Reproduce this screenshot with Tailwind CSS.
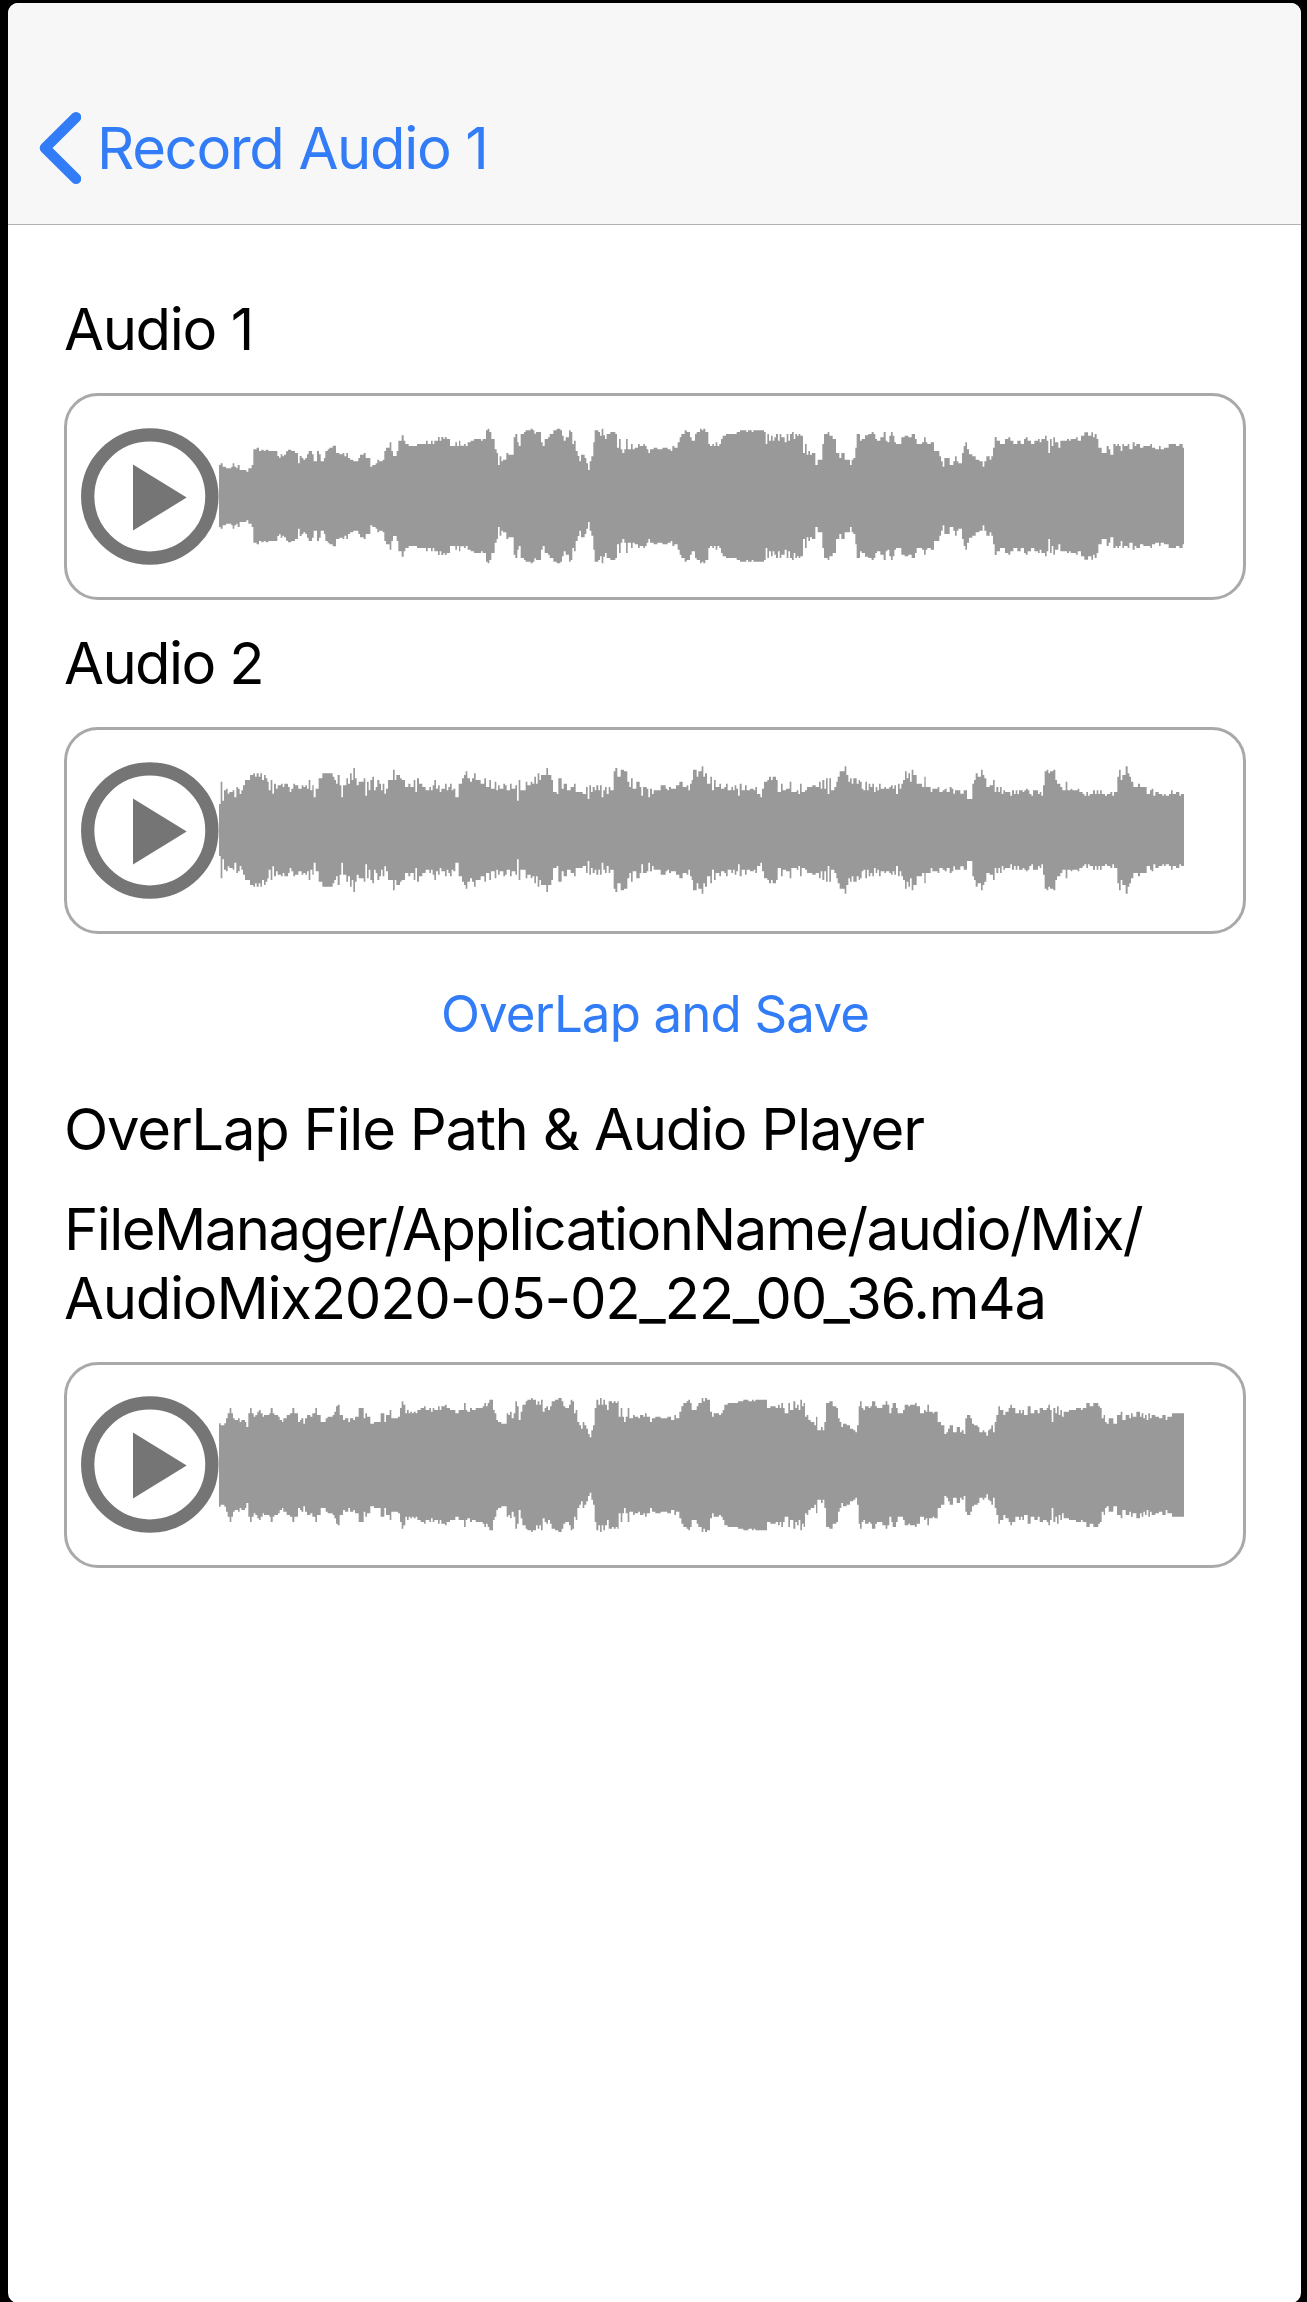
<!DOCTYPE html>
<html lang="en">
<head>
<meta charset="utf-8">
<title>Record Audio</title>
<script src="https://cdn.jsdelivr.net/npm/@tailwindcss/browser@4"></script>
</head>
<body class="bg-black">
<div class="h-[2302px] w-[1307px] overflow-hidden bg-black pt-[3px] pl-2 font-['Inter',sans-serif] text-[58px] leading-[70px] text-black">
  <main class="flex h-[2300px] w-[1293px] flex-col overflow-hidden rounded-[10px] bg-white">
    <header class="flex h-[222px] shrink-0 items-start border-b border-[#b2b2b2] bg-[#f7f7f7] pt-[109px] pl-[31px] text-[#327cf7]">
      <svg class="h-[72px] w-[42px] shrink-0" viewBox="0 0 42 72" fill="none" stroke="currentColor" stroke-width="10.6" stroke-linecap="round" stroke-linejoin="round"><path d="M37 5.3 6 36l31 30.7"/></svg>
      <span class="mt-px ml-4 whitespace-nowrap tracking-[-1.35px]">Record Audio 1</span>
    </header>
    <div class="flex w-full flex-col pt-[69px] pr-[55px] pl-14">
      <h2 class="tracking-[-1.35px]">Audio 1</h2>
      <section data-wave="0" class="mt-[29px] flex h-[206.5px] items-center rounded-[34px] border-3 border-[#a9a9a9]"></section>
      <h2 class="mt-[28px] tracking-[-1.6px]">Audio 2</h2>
      <section data-wave="1" class="mt-[29.5px] flex h-[206.5px] items-center rounded-[34px] border-3 border-[#a9a9a9]"></section>
      <button class="mt-[49px] h-[62px] text-[51px] leading-[62px] tracking-[-0.85px] text-[#327cf7]">OverLap and Save</button>
      <h2 class="mt-[49px] tracking-[-1.25px]">OverLap File Path &amp; Audio Player</h2>
      <p class="mt-[31px] leading-[69px]"><span class="tracking-[-1.55px]">FileManager/ApplicationName/audio/Mix/</span><br><span class="tracking-[-1.25px]">AudioMix2020-05-02_22_00_36.m4a</span></p>
      <section data-wave="2" class="mt-[29px] flex h-[206.5px] items-center rounded-[34px] border-3 border-[#a9a9a9]"></section>
    </div>
  </main>
</div>
<script>
// Each track: vertical axis and three segments of "start level" pairs, in thirds of a pixel.
const tracks = [
 {axis:334, parts:[
  [-477,`477 241 482 236 488 246 498 251 514 246 518 236 523 246 529 251 533 241 539 256 559 261 565 251 575 241 580 194 590 189 597 199 604 195 611 199 617 195 625 199 652 214 657 219 662 209 667 215 672 210 678 200 684 195 694 199 705 205 714 236 719 214 725 220 730 225 736 220 741 209 746 199 756 209 761 230 771 199 777 209 782 230 792 220 796 199 803 194 808 189 818 183 828 205 838 209 848 205 853 215 859 205 864 220 870 225 880 230 895 220 900 210 911 205 917 220 931 246 937 241 947 236 952 225 957 230 968 225 973 199 978 189 989 173 994 199 999 214 1010 199 1015 168 1025 152 1031 168 1036 178 1046 184 1071 178 1098 168 1103 178 1113 168 1118 178 1123 168 1134 157 1139 168 1144 157 1150 162 1155 157 1160 163 1170 184 1186 173 1191 184 1197 168 1201 183 1212 178 1217 184 1223 173`],
  [753,`2 168 12 163 33 168 38 163 48 137 53 132 58 142 64 163 74 194 80 205 84 241 89 215 94 230 99 225 109 205 115 210 131 158 136 148 142 173 146 184 152 148 162 142 167 137 182 132 188 137 193 147 198 142 213 173 218 184 224 163 234 158 239 148 250 137 260 132 271 137 276 153 281 168 287 158 297 137 302 142 307 178 312 168 317 199 323 214 328 230 333 210 344 220 349 236 354 256 359 230 364 215 370 173 374 137 385 142 390 153 395 132 400 152 405 163 410 148 421 142 436 148 441 189 447 163 452 194 457 205 463 194 468 163 473 194 483 178 488 194 494 189 504 178 509 184 520 178 525 184 530 194 535 205 540 194 551 189 562 194 577 189 593 194 602 199 607 184 613 189 623 173 629 158 634 148 644 137 650 142 660 158 665 168 675 148 680 142 690 132 695 137 700 132 706 142 715 178 720 184 727 178 732 184 737 173 742 184 748 178 753 163 758 153 768 148 800 142 810 137 829 142 834 137 845 142 850 137 882 142 887 178 892 148 897 168 903 153 908 168 913 158 918 148 924 168 929 148 934 158 944 173 950 148 955 168 960 148 966 142 971 163 976 148 981 153 986 148 991 153 999 205 1005 178 1010 210 1015 199 1020 210 1026 205 1036 241 1043 225 1057 178 1062 148 1073 142 1078 153 1088 163 1098 205 1108 220 1114 205 1124 225 1140 241 1145 225 1150 220 1156 189 1160 148`],
  [1923,`0 168 5 163 15 152 25 148 35 142 41 148 46 163 51 168 61 158 71 142 77 168 82 173 88 153 93 142 98 153 103 173 108 178 124 158 134 153 145 158 155 148 165 163 170 178 186 173 192 158 197 173 202 178 212 173 222 199 238 215 243 230 248 246 253 220 269 241 280 230 285 215 290 230 295 236 306 205 311 184 316 173 321 194 327 209 337 215 347 225 358 230 368 246 373 230 379 215 389 225 394 215 399 189 404 157 410 168 420 178 435 163 445 158 451 168 460 178 472 168 482 178 492 163 497 158 503 168 513 178 523 168 534 163 539 173 544 163 555 153 560 168 565 205 570 163 575 184 580 158 585 173 595 189 601 168 621 163 627 168 632 163 648 158 653 168 663 153 673 143 684 153 694 143 699 158 704 148 710 163 715 189 725 205 740 184 746 194 751 210 760 178 767 184 772 178 777 184 782 199 787 178 792 184 803 178 808 194 818 173 824 184 829 178 840 189 850 184 871 178 876 189 886 194 897 184 902 194 912 189 926 178 948 184 958 178 968 189`]]},
 {axis:332, parts:[
  [-477,`477 254 482 187 487 244 492 213 498 208 503 223 508 218 518 213 523 234 529 203 534 208 539 224 544 213 549 198 555 182 570 167 580 162 585 172 590 162 596 172 601 162 606 182 612 167 617 177 622 187 626 213 632 182 637 223 642 193 648 208 653 198 663 193 668 203 673 193 684 203 689 218 694 208 700 193 705 198 715 208 725 198 730 203 736 198 741 208 746 182 751 213 757 198 761 234 767 208 776 177 787 162 818 172 823 182 828 193 833 167 839 198 844 234 849 198 859 177 864 193 870 162 875 182 880 146 885 177 890 198 896 187 911 177 916 229 921 187 926 213 931 182 937 172 942 213 947 203 952 182 958 193 963 213 968 193 973 223 978 208 984 182 999 151 1004 182 1009 167 1020 177 1025 182 1035 203 1045 193 1051 203 1061 182 1066 218 1071 177 1077 193 1087 203 1097 213 1108 203 1113 213 1118 198 1123 182 1128 208 1134 198 1139 218 1144 208 1155 193 1160 213 1165 203 1170 193 1175 213 1180 208 1186 234 1196 193 1206 177 1212 167 1217 156 1222 177`],
  [753,`0 187 6 177 12 162 17 182 32 193 43 177 48 203 58 182 63 208 74 187 79 213 84 198 89 208 100 193 105 198 110 213 120 193 125 208 136 198 141 244 146 182 151 213 167 187 172 198 182 187 187 193 193 172 198 193 203 162 208 182 213 167 229 146 234 167 244 182 249 218 260 224 265 177 275 208 281 193 291 213 302 203 312 193 317 218 338 224 348 203 353 239 358 198 363 218 368 203 374 213 379 198 385 213 390 198 395 234 400 213 405 203 410 224 416 203 421 213 431 156 436 146 442 172 452 151 462 156 472 187 478 203 483 177 488 208 499 187 509 203 514 229 519 203 530 208 535 234 540 208 546 224 551 213 572 198 587 208 592 213 597 203 603 208 618 198 628 187 638 203 650 198 655 213 660 193 665 182 669 151 680 172 685 156 695 141 700 172 705 162 711 193 721 172 726 213 732 182 737 203 748 193 753 208 763 203 768 193 773 213 784 203 789 213 794 198 799 208 804 229 809 193 815 213 825 198 830 213 840 208 851 213 856 203 861 224 871 234 876 208 882 187 892 182 897 172 903 182 908 172 918 182 923 218 933 193 938 213 948 208 959 187 964 218 980 213 985 224 990 193 995 218 1005 213 1011 203 1027 198 1037 203 1047 187 1052 208 1057 182 1063 208 1068 177 1073 224 1078 177 1083 213 1093 203 1099 187 1103 172 1109 156 1124 141 1129 167 1135 187 1140 177 1145 193 1150 177 1160 193 1166 182`],
  [1923,`0 187 5 208 10 213 16 187 21 213 26 193 31 203 37 193 42 218 47 203 52 213 57 193 62 208 73 203 78 208 88 203 93 198 98 208 103 198 108 224 114 193 119 208 124 193 129 182 135 156 140 177 145 162 150 187 155 151 160 167 170 193 186 203 193 172 197 203 212 218 217 208 233 203 238 218 248 213 254 208 260 218 269 203 275 208 280 223 285 213 301 223 311 213 321 239 337 193 342 182 347 162 353 172 363 151 368 167 373 177 379 203 389 198 399 182 404 218 409 203 415 218 420 203 425 224 430 213 435 218 451 229 456 213 462 224 467 213 472 224 477 213 488 218 493 213 498 208 503 213 508 224 514 229 519 213 534 224 539 218 544 229 549 198 554 156 560 151 565 162 570 156 580 151 586 182 591 193 601 203 607 213 617 187 622 213 632 208 637 213 653 208 658 218 668 224 673 229 679 218 684 229 689 224 699 213 705 224 710 213 715 224 720 213 725 224 735 229 741 224 751 218 757 229 762 218 772 172 777 151 782 182 787 167 797 141 803 162 808 172 813 187 820 203 834 193 840 203 860 224 870 213 875 208 880 229 886 218 896 224 907 229 912 224 917 229 927 224 933 213 938 224 948 218 958 229 963 224`]]},
 {axis:330, parts:[
  [-477,`477 205 482 211 493 205 498 190 503 175 509 159 514 175 519 190 524 195 534 190 539 201 544 195 555 201 559 216 565 175 570 159 575 175 581 185 586 180 592 170 597 165 602 175 608 185 612 180 628 175 632 159 638 175 643 180 654 185 659 195 666 201 670 190 680 180 690 175 697 159 703 175 714 201 720 195 724 190 730 206 735 190 741 180 751 185 757 175 766 159 771 180 782 201 797 190 803 185 818 180 823 170 828 154 833 149 839 180 849 195 855 190 865 201 870 190 880 195 885 185 896 159 911 190 916 175 921 185 931 206 942 201 962 175 973 201 978 180 989 165 994 190 1014 185 1020 159 1025 139 1030 149 1036 175 1041 165 1046 175 1051 170 1056 175 1061 170 1067 175 1072 165 1082 159 1092 154 1097 165 1108 159 1113 170 1118 159 1123 165 1134 154 1139 165 1144 154 1155 149 1160 159 1170 165 1186 175 1196 165 1212 144 1217 165 1222 170`],
  [753,`0 159 6 165 17 159 38 154 43 144 48 154 53 144 58 134 69 165 74 175 79 195 84 201 94 206 110 175 115 180 120 170 125 190 131 175 136 139 141 154 146 195 152 170 157 149 167 139 172 134 183 129 188 134 198 149 203 139 208 149 213 134 218 170 224 159 229 154 234 165 240 154 245 139 255 134 265 129 275 139 280 154 286 159 297 149 302 134 307 139 312 175 317 165 322 201 328 211 333 221 338 201 343 211 349 221 354 237 359 247 364 226 369 211 374 159 379 134 385 149 390 129 395 149 400 134 405 149 411 165 416 139 426 144 431 139 437 144 442 139 446 185 452 159 457 185 462 201 467 185 473 159 478 190 489 180 494 185 505 190 510 180 520 185 525 175 530 185 540 201 546 190 556 185 572 190 592 185 603 195 613 180 618 190 628 170 634 154 640 144 650 139 655 134 660 144 665 165 680 154 685 144 695 129 700 139 705 129 711 134 720 170 726 185 731 175 747 180 753 175 758 165 763 149 773 144 804 139 820 134 835 139 846 134 851 139 856 134 891 159 901 154 917 159 924 149 929 159 934 144 939 159 944 175 955 144 960 165 970 139 976 159 981 149 986 165 991 134 996 154 1001 144 1005 185 1010 180 1015 195 1022 201 1033 211 1038 185 1042 226 1053 216 1058 226 1063 201 1068 144 1078 139 1088 154 1099 159 1104 190 1109 201 1114 216 1119 206 1130 211 1140 221 1150 226 1156 232 1161 211 1166 154`],
  [1923,`0 139 5 159 10 165 15 154 26 159 31 154 36 139 46 154 51 159 67 149 77 139 82 149 88 175 94 159 98 144 108 159 113 175 129 165 134 149 145 154 150 149 165 144 170 154 180 175 192 165 197 170 202 149 207 170 218 175 223 170 233 201 243 211 253 237 259 232 264 221 269 211 279 232 290 216 300 232 305 226 311 237 316 190 321 180 331 190 336 206 342 211 353 216 358 232 368 226 373 232 379 242 384 226 389 221 394 211 399 232 404 201 409 180 415 154 420 165 430 180 436 170 446 159 451 149 456 159 466 175 477 165 482 175 487 165 492 180 503 154 512 175 523 165 533 175 539 159 549 165 560 159 565 149 570 165 575 201 580 159 586 175 591 154 596 180 601 165 606 185 611 170 627 165 648 159 663 165 668 159 679 144 689 154 700 144 715 154 720 159 725 190 731 180 735 201 740 206 746 190 760 206 771 180 782 170 787 195 797 180 808 190 813 175 818 185 829 170 840 185 845 175 850 190 855 180 860 195 865 175 870 190 875 180 886 185 897 190 907 180 917 195 922 185 936 175`]]}
];
const END = 2895, MID = 216;
document.querySelectorAll('[data-wave]').forEach(card => {
  const {axis, parts} = tracks[card.dataset.wave];
  const bars = [];
  for (const [shift, text] of parts) {
    const n = text.split(' ').map(Number);
    for (let i = 0; i < n.length; i += 2) bars.push([n[i] + shift, axis - n[i + 1]]);
  }
  // One closed outline: along the upper edge, then back along the mirrored lower edge.
  let outline = `M0 ${MID}`;
  bars.forEach(([x, h]) => { outline += `H${x}V${MID - h}`; });
  outline += `H${END}`;
  for (let i = bars.length - 1; i >= 0; i--) outline += `V${MID + bars[i][1]}H${bars[i][0]}`;
  outline += 'Z';
  card.innerHTML = `
    <svg class="ml-[14px] h-[137px] w-[138px] shrink-0" viewBox="0 0 138 137"><ellipse cx="68.8" cy="68.5" rx="62.1" ry="61.6" fill="none" stroke="#757575" stroke-width="13.3"/><path d="M52 36.5 105.7 69.5 52 102.5Z" fill="#757575"/></svg>
    <svg class="h-36 w-[965px] shrink-0" viewBox="0 0 2895 432"><path d="${outline}" fill="#999"/></svg>`;
});
</script>
</body>
</html>
